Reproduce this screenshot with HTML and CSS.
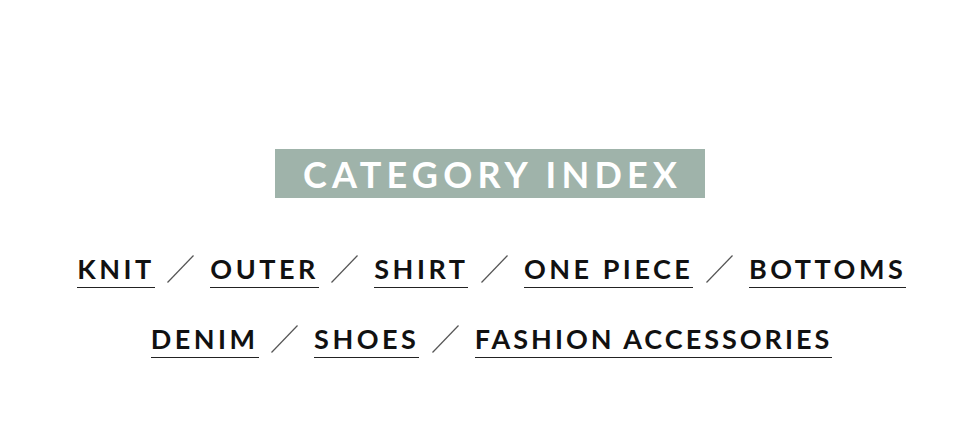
FILE: index.html
```html
<!DOCTYPE html>
<html>
<head>
<meta charset="utf-8">
<link rel="stylesheet" href="styles.css">
</head>
<body>
<section class="category">
  <h2 class="category-title">CATEGORY INDEX</h2>
  <ul class="category-row">
    <li><a class="cat-link" href="#">KNIT</a></li>
    <li class="sep"><svg viewBox="0 0 27 28" width="27" height="28"><line x1="0.5" y1="27.5" x2="26.5" y2="0.5"/></svg></li>
    <li><a class="cat-link" href="#">OUTER</a></li>
    <li class="sep"><svg viewBox="0 0 27 28" width="27" height="28"><line x1="0.5" y1="27.5" x2="26.5" y2="0.5"/></svg></li>
    <li><a class="cat-link" href="#">SHIRT</a></li>
    <li class="sep"><svg viewBox="0 0 27 28" width="27" height="28"><line x1="0.5" y1="27.5" x2="26.5" y2="0.5"/></svg></li>
    <li><a class="cat-link" href="#">ONE PIECE</a></li>
    <li class="sep"><svg viewBox="0 0 27 28" width="27" height="28"><line x1="0.5" y1="27.5" x2="26.5" y2="0.5"/></svg></li>
    <li><a class="cat-link" href="#">BOTTOMS</a></li>
  </ul>
  <ul class="category-row">
    <li><a class="cat-link" href="#">DENIM</a></li>
    <li class="sep"><svg viewBox="0 0 27 28" width="27" height="28"><line x1="0.5" y1="27.5" x2="26.5" y2="0.5"/></svg></li>
    <li><a class="cat-link" href="#">SHOES</a></li>
    <li class="sep"><svg viewBox="0 0 27 28" width="27" height="28"><line x1="0.5" y1="27.5" x2="26.5" y2="0.5"/></svg></li>
    <li><a class="cat-link cat-link--long" href="#">FASHION ACCESSORIES</a></li>
  </ul>
</section>
</body>
</html>
```
FILE: styles.css
```css
html, body {
  margin: 0;
  padding: 0;
  background: #fff;
}
.category {
  width: 980px;
  height: 445px;
  padding-top: 149px;
  box-sizing: border-box;
  display: flex;
  flex-direction: column;
  align-items: center;
  font-family: "Lato", "Liberation Sans", sans-serif;
}
.category-title {
  margin: 0;
  width: 430px;
  height: 49px;
  background: #9fb3aa;
  color: #fff;
  font-size: 36px;
  font-weight: 700;
  letter-spacing: 5.2px;
  text-indent: 5.2px;
  line-height: 50px;
  text-align: center;
  margin-bottom: 51px;
}
.category-row {
  list-style: none;
  margin: 0;
  padding: 0;
  display: flex;
  align-items: center;
  gap: 16px;
  height: 40px;
  margin-bottom: 30px;
}
.category-row li {
  display: block;
}
.cat-link {
  display: block;
  color: #111;
  text-decoration: none;
  font-size: 27px;
  font-weight: 700;
  letter-spacing: 3.5px;
  margin-right: -3.5px;
  line-height: 30px;
  padding-bottom: 3px;
  margin-top: 3px;
  border-bottom: 1.5px solid #222;
}
.cat-link--long {
  letter-spacing: 3px;
  margin-right: -3px;
}
.sep {
  width: 27px;
  height: 28px;
}
.sep svg {
  display: block;
}
.sep line {
  stroke: #555;
  stroke-width: 1.2;
}
```
